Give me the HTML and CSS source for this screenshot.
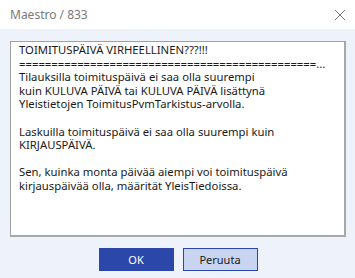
FILE: index.html
```html
<!DOCTYPE html>
<html>
<head>
<meta charset="utf-8">
<link rel="stylesheet" href="styles.css">
</head>
<body>
<div class="titlebar">
  <span class="title">Maestro / 833</span>
  <svg class="close" width="12" height="12" viewBox="0 0 12 12"><path d="M1 1L11 11M11 1L1 11" stroke="#777777" stroke-width="1" fill="none"/></svg>
</div>
<div class="content">
  <div class="msgbox">
    <div class="line">TOIMITUSPÄIVÄ VIRHEELLINEN???!!!</div>
    <div class="line">==============================================...</div>
    <div class="line">Tilauksilla toimituspäivä ei saa olla suurempi</div>
    <div class="line">kuin KULUVA PÄIVÄ tai KULUVA PÄIVÄ lisättynä</div>
    <div class="line">Yleistietojen ToimitusPvmTarkistus-arvolla.</div>
    <div class="line">&nbsp;</div>
    <div class="line">Laskuilla toimituspäivä ei saa olla suurempi kuin</div>
    <div class="line">KIRJAUSPÄIVÄ.</div>
    <div class="line">&nbsp;</div>
    <div class="line">Sen, kuinka monta päivää aiempi voi toimituspäivä</div>
    <div class="line">kirjauspäivää olla, määrität YleisTiedoissa.</div>
  </div>
  <div class="buttons">
    <button class="btn primary">OK</button>
    <button class="btn secondary">Peruuta</button>
  </div>
</div>
</body>
</html>
```
FILE: styles.css
```css
html, body {
  margin: 0;
  padding: 0;
}
body {
  width: 355px;
  height: 278px;
  background: #eef2fa;
  font-family: "Noto Sans", "DejaVu Sans", sans-serif;
  font-size: 11px;
  overflow: hidden;
}
.titlebar {
  height: 29px;
  background: #ffffff;
  display: flex;
  align-items: center;
  justify-content: space-between;
  padding: 0 9px 0 10px;
  box-sizing: border-box;
}
.title {
  color: #7a7a7a;
  font-size: 12px;
}
.content {
  padding: 12px 9px 0 10px;
}
.msgbox {
  height: 196px;
  box-sizing: border-box;
  background: #ffffff;
  border: 1px solid #a0a0a0;
  border-right: 2px solid #a8a8a8;
  border-bottom: 2px solid #a8a8a8;
  padding: 1px 10px 0 8px;
  color: #1a1a1a;
  font-size: 11.3px;
}
.line {
  height: 13.6px;
  line-height: 13.6px;
  white-space: nowrap;
}
.buttons {
  display: flex;
  justify-content: center;
  gap: 9px;
  margin-top: 11px;
}
.btn {
  width: 75px;
  height: 23px;
  font-family: "Noto Sans", "DejaVu Sans", sans-serif;
  font-size: 11px;
  padding: 0;
  box-sizing: border-box;
}
.primary {
  background: #2b47a9;
  color: #ffffff;
  border: 1px solid #2b47a9;
}
.secondary {
  background: #c9d4f0;
  color: #1a1a1a;
  border: 1px solid #2b47a9;
}
```
